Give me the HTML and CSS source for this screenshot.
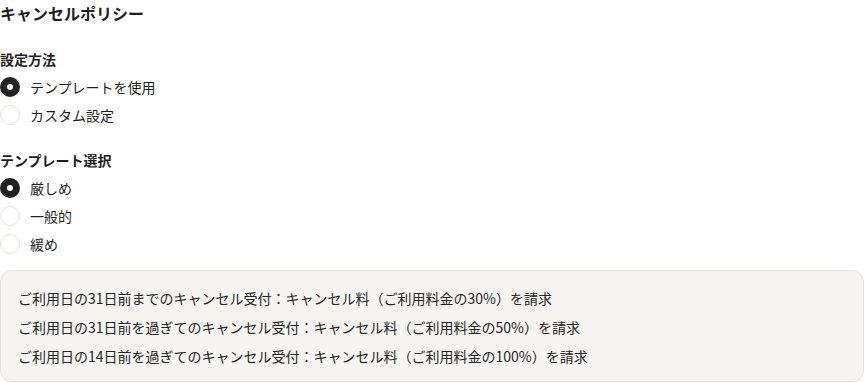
FILE: index.html
```html
<!DOCTYPE html>
<html lang="ja">
<head>
<meta charset="utf-8">
<link rel="stylesheet" href="styles.css">
</head>
<body>
<div class="page">
  <h1 class="title">キャンセルポリシー</h1>
  <section class="group">
    <div class="group-label">設定方法</div>
    <label class="option"><span class="radio checked"></span><span>テンプレートを使用</span></label>
    <label class="option"><span class="radio"></span><span>カスタム設定</span></label>
  </section>
  <section class="group">
    <div class="group-label">テンプレート選択</div>
    <label class="option"><span class="radio checked"></span><span>厳しめ</span></label>
    <label class="option"><span class="radio"></span><span>一般的</span></label>
    <label class="option"><span class="radio"></span><span>緩め</span></label>
  </section>
  <div class="policy">
    <p>ご利用日の31日前までのキャンセル受付：キャンセル料（ご利用料金の30%）を請求</p>
    <p>ご利用日の31日前を過ぎてのキャンセル受付：キャンセル料（ご利用料金の50%）を請求</p>
    <p>ご利用日の14日前を過ぎてのキャンセル受付：キャンセル料（ご利用料金の100%）を請求</p>
  </div>
</div>
</body>
</html>
```
FILE: styles.css
```css
* { box-sizing: border-box; }
html, body {
  margin: 0;
  padding: 0;
  background: #ffffff;
}
body {
  font-family: "Noto Sans CJK JP", "Noto Sans", sans-serif;
  color: #1f1f1f;
  width: 864px;
  height: 383px;
  overflow: hidden;
}
.page {
  display: flex;
  flex-direction: column;
}
.title {
  margin: 0;
  font-size: 16px;
  font-weight: 700;
  line-height: 26px;
}
.group {
  display: flex;
  flex-direction: column;
  margin-top: 20px;
}
.group + .group {
  margin-top: 18px;
}
.group-label {
  font-size: 14px;
  font-weight: 700;
  line-height: 27px;
}
.option {
  display: flex;
  align-items: center;
  gap: 10px;
  height: 28px;
  font-size: 14px;
  line-height: 20px;
}
.radio {
  width: 20px;
  height: 20px;
  border-radius: 50%;
  border: 1px solid #e4e2dd;
  background: #ffffff;
  flex: none;
}
.radio.checked {
  border: 7px solid #222222;
}
.policy {
  margin-top: 12px;
  width: 864px;
  background: #f6f5f2;
  border: 1px solid #e5e3de;
  border-radius: 12px;
  padding: 13px 17px 10px;
}
.policy p {
  margin: 0;
  font-size: 14px;
  line-height: 29px;
  color: #262626;
}
```
